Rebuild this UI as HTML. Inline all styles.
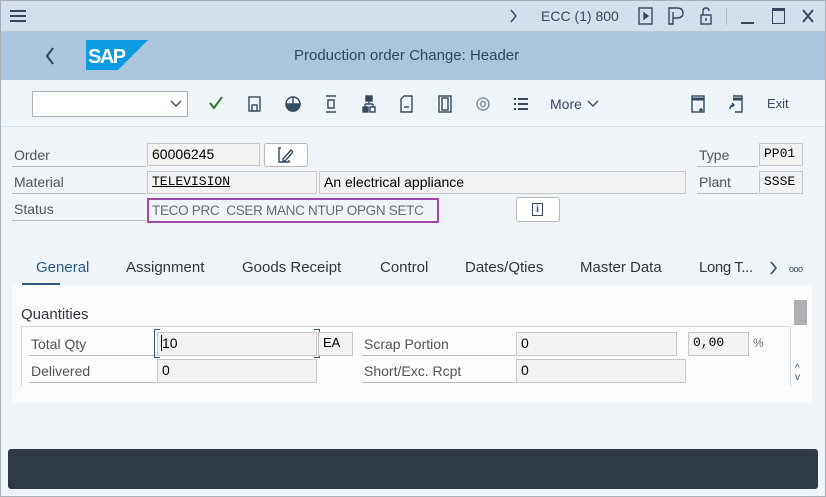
<!DOCTYPE html>
<html><head><style>
*{margin:0;padding:0;box-sizing:border-box}
body{width:826px;height:497px;position:relative;overflow:hidden;background:#eff4f8;font-family:"Liberation Sans",sans-serif;font-size:14px;color:#32363a}
.a{position:absolute}
.t{position:absolute;white-space:nowrap}
.f{position:absolute;background:#f2f2f2;border:1px solid #c8c8c8;padding-left:4px;font-size:14px;line-height:20px;color:#000;white-space:nowrap}
.lbl{position:absolute;border-bottom:1px solid #b8bcc0;color:#515456;padding-left:2px;line-height:22px;white-space:nowrap}
svg.i{position:absolute;fill:none;stroke:#354a5f;stroke-width:1.4}
</style></head><body>
<div class="a" style="left:0;top:0;width:826px;height:32px;background:#d3dfeb;border-bottom:1px solid #b9c7d5"></div>
<div class="a" style="left:10px;top:10px;width:16px;height:2px;background:#354a5f;box-shadow:0 5px 0 #354a5f,0 10px 0 #354a5f"></div>
<svg class="i" style="left:509px;top:9px" width="10" height="14"><path d="M2 1L7 7L2 13"/></svg>
<div class="t" style="left:541px;top:8px;color:#354a5f">ECC (1) 800</div>
<svg class="i" style="left:638px;top:7px" width="16" height="18"><rect x="1" y="1" width="13" height="16"/><path d="M6 6L10 9L6 12Z" fill="#354a5f"/></svg>
<svg class="i" style="left:668px;top:7px" width="18" height="18"><path d="M1 1H9Q15 1 15 6Q15 11 9 11H5V17H1ZM5 5V11"/></svg>
<svg class="i" style="left:699px;top:7px" width="14" height="18"><path d="M4 8V4Q4 1 7 1Q10 1 10 4"/><rect x="2" y="8" width="10" height="9"/><path d="M7 11V14"/></svg>
<div class="a" style="left:726px;top:8px;width:1px;height:17px;background:#b0bcc8"></div>
<div class="a" style="left:741px;top:22px;width:13px;height:2px;background:#354a5f"></div>
<div class="a" style="left:772px;top:8px;width:13px;height:16px;border:1.5px solid #354a5f;border-top-width:3px"></div>
<svg class="i" style="left:802px;top:9px;stroke-width:2" width="12" height="14"><path d="M1 1L11 13M11 1L1 13"/></svg>

<div class="a" style="left:0;top:32px;width:826px;height:48px;background:#aac5dc"></div>
<svg class="i" style="left:44px;top:47px;stroke-width:2" width="12" height="18"><path d="M9 1L3 9L9 17"/></svg>
<svg class="a" style="left:86px;top:40px" width="62" height="30"><polygon points="0,0 62,0 32,30 0,30" fill="#0a9be3"/><text x="2" y="23" fill="#fff" font-family="Liberation Sans" font-weight="bold" font-size="20" letter-spacing="-1.5">SAP</text></svg>
<div class="t" style="left:294px;top:47px;color:#32475c;font-size:15px">Production order Change: Header</div>

<div class="a" style="left:0;top:80px;width:826px;height:47px;background:#eff4f9;border-bottom:1px solid #d9e2ea"></div>
<div class="a" style="left:32px;top:91px;width:156px;height:26px;background:#fff;border:1px solid #b0b0b0"></div>
<svg class="i" style="left:170px;top:100px" width="12" height="8"><path d="M1 1L6 6L11 1"/></svg>
<svg class="i" style="left:209px;top:96px;stroke:#2b7c2b;stroke-width:2" width="14" height="14"><path d="M1 7L5 12L13 1"/></svg>
<svg class="i" style="left:248px;top:96px" width="13" height="16"><rect x="1" y="1" width="11" height="14"/><rect x="4" y="9" width="5" height="6"/></svg>
<svg class="i" style="left:285px;top:96px" width="16" height="16"><circle cx="8" cy="8" r="7"/><path d="M8 1V8H1A7 7 0 0 0 8 15Z" fill="#354a5f"/><path d="M8 8H15A7 7 0 0 1 8 15" fill="#354a5f"/></svg>
<svg class="i" style="left:325px;top:95px" width="12" height="18"><path d="M1 1H11M1 17H11"/><rect x="3" y="5" width="6" height="8"/></svg>
<svg class="i" style="left:362px;top:95px" width="14" height="18"><rect x="4" y="1" width="6" height="5" fill="#354a5f"/><path d="M7 6V9M3 9H11M3 9V12M11 9V12"/><rect x="1" y="12" width="5" height="5" fill="#354a5f"/><rect x="8" y="12" width="5" height="5"/></svg>
<svg class="i" style="left:400px;top:95px" width="13" height="18"><path d="M4 1H12V17H1V4Z"/><path d="M4 12H9"/></svg>
<svg class="i" style="left:438px;top:95px" width="14" height="18"><rect x="1" y="1" width="12" height="16"/><rect x="4" y="3" width="6" height="12"/></svg>
<svg class="i" style="left:475px;top:95px;stroke:#8090a0" width="16" height="18"><circle cx="8" cy="9" r="6"/><circle cx="8" cy="9" r="2.5"/></svg>
<svg class="i" style="left:513px;top:97px;stroke-width:2" width="15" height="14"><path d="M1 2H3M5 2H15M1 7H3M5 7H15M1 12H3M5 12H15"/></svg>
<div class="t" style="left:550px;top:96px;color:#354a5f">More</div>
<svg class="i" style="left:587px;top:100px" width="12" height="8"><path d="M1 1L6 6L11 1"/></svg>
<svg class="i" style="left:691px;top:95px" width="14" height="18"><rect x="1" y="1" width="12" height="16"/><path d="M1 4H13" stroke-width="3"/><path d="M10 13V17M8 15H12"/></svg>
<svg class="i" style="left:729px;top:95px" width="14" height="18"><path d="M4 1H13V17H6"/><path d="M4 4H13" stroke-width="3"/><path d="M1 14Q1 10 5 10M3 8L5 10L3 12"/></svg>
<div class="t" style="left:767px;top:96px;color:#354a5f;font-size:13px">Exit</div>

<div class="lbl" style="left:12px;top:144px;width:134px">Order</div>
<div class="f" style="left:147px;top:143px;width:113px;height:23px">60006245</div>
<div class="a" style="left:264px;top:143px;width:44px;height:24px;background:#fff;border:1px solid #b8b8b8;border-radius:3px"></div>
<svg class="i" style="left:277px;top:146px" width="16" height="18"><path d="M4 2H2V16H12V14"/><path d="M6 13L14 4L16 6L8 15H6Z"/></svg>
<div class="lbl" style="left:697px;top:144px;width:61px">Type</div>
<div class="f" style="left:759px;top:143px;width:44px;height:23px;font-family:'Liberation Mono',monospace;font-size:13px">PP01</div>

<div class="lbl" style="left:12px;top:171px;width:134px">Material</div>
<div class="f" style="left:147px;top:171px;width:170px;height:23px;font-family:'Liberation Mono',monospace;font-size:13px"><u>TELEVISION</u></div>
<div class="f" style="left:319px;top:171px;width:367px;height:23px">An electrical appliance</div>
<div class="lbl" style="left:697px;top:171px;width:61px">Plant</div>
<div class="f" style="left:759px;top:171px;width:44px;height:23px;font-family:'Liberation Mono',monospace;font-size:13px">SSSE</div>

<div class="lbl" style="left:12px;top:198px;width:134px">Status</div>
<div class="a" style="left:147px;top:198px;width:292px;height:25px;border:2px solid #9e4aa8;color:#6a6d70;padding-left:3px;line-height:21px;white-space:nowrap;font-size:13.5px;letter-spacing:-0.3px">TECO PRC&nbsp; CSER MANC NTUP OPGN SETC</div>
<div class="a" style="left:516px;top:197px;width:44px;height:25px;background:#fff;border:1px solid #b8b8b8;border-radius:3px"></div>
<div class="a" style="left:532px;top:203px;width:11px;height:13px;border:1px solid #354a5f;font-size:10px;text-align:center;line-height:11px;color:#354a5f;font-weight:bold">i</div>

<div class="t" style="left:36px;top:259px;color:#2c5a85;font-size:15px">General</div>
<div class="a" style="left:22px;top:283px;width:38px;height:3px;background:#34597e"></div>
<div class="t" style="left:126px;top:259px;font-size:15px">Assignment</div>
<div class="t" style="left:242px;top:259px;font-size:15px">Goods Receipt</div>
<div class="t" style="left:380px;top:259px;font-size:15px">Control</div>
<div class="t" style="left:465px;top:259px;font-size:15px">Dates/Qties</div>
<div class="t" style="left:580px;top:259px;font-size:15px">Master Data</div>
<div class="t" style="left:699px;top:259px;font-size:15px;letter-spacing:-0.4px">Long T...</div>
<svg class="i" style="left:770px;top:261px;stroke-width:1.6" width="8" height="14"><path d="M1 1L6 7L1 13"/></svg>
<div class="t" style="left:789px;top:264px;font-size:9px;color:#354a5f;letter-spacing:-0.5px">ooo</div>

<div class="a" style="left:12px;top:285px;width:800px;height:118px;background:#fafbfd"></div>
<div class="t" style="left:21px;top:306px;font-size:15px;color:#32363a">Quantities</div>
<div class="a" style="left:21px;top:326px;width:770px;height:60px;border:1px solid #d4d8dc;border-bottom:none"></div>
<div class="a" style="left:794px;top:300px;width:13px;height:25px;background:#b0b0b0"></div>
<div class="t" style="left:795px;top:364px;font-size:10px;color:#354a5f;line-height:9px">^<br>v</div>

<div class="lbl" style="left:29px;top:333px;width:127px">Total Qty</div>
<div class="f" style="left:157px;top:332px;width:160px;height:24px">10</div>
<div class="a" style="left:154px;top:329px;width:166px;height:29px;border:1.5px solid #34597e;clip-path:polygon(0 0,6px 0,6px 100%,0 100%,0 0,100% 0,100% 100%,calc(100% - 6px) 100%,calc(100% - 6px) 0)"></div>
<div class="a" style="left:161px;top:335px;width:1px;height:16px;background:#000"></div>
<div class="f" style="left:318px;top:332px;width:35px;height:24px;font-size:13px">EA</div>
<div class="lbl" style="left:362px;top:333px;width:153px">Scrap Portion</div>
<div class="f" style="left:516px;top:332px;width:161px;height:24px">0</div>
<div class="f" style="left:688px;top:332px;width:61px;height:24px;font-family:'Liberation Mono',monospace;font-size:13px">0,00</div>
<div class="t" style="left:753px;top:336px;font-size:12px;color:#6a6d70">%</div>

<div class="lbl" style="left:29px;top:360px;width:127px">Delivered</div>
<div class="f" style="left:157px;top:359px;width:160px;height:24px">0</div>
<div class="lbl" style="left:362px;top:360px;width:153px">Short/Exc. Rcpt</div>
<div class="f" style="left:516px;top:359px;width:170px;height:24px">0</div>

<div class="a" style="left:8px;top:449px;width:810px;height:40px;background:#2f3a47;border-radius:3px"></div>
<div class="a" style="left:0;top:0;width:826px;height:497px;box-shadow:inset 0 0 0 1px #a8b0b8;z-index:5"></div>
</body></html>
